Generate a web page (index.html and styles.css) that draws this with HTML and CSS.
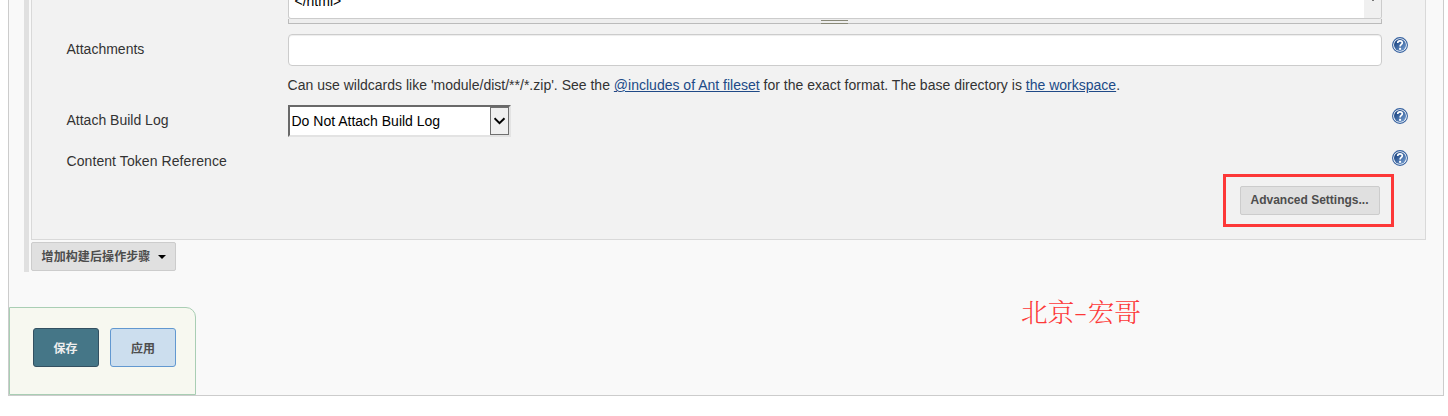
FILE: index.html
```html
<!DOCTYPE html>
<html lang="zh-CN">
<head>
<meta charset="utf-8">
<title>Jenkins</title>
<link rel="stylesheet" href="styles.css">
</head>
<body>
<svg class="defs" width="0" height="0">
  <defs>
    <linearGradient id="blue" x1="0" y1="0" x2="1" y2="1">
      <stop offset="0.2" stop-color="#204a87"/>
      <stop offset="1" stop-color="#7ba4d6"/>
    </linearGradient>
    <symbol id="help" viewBox="0 0 16 16">
      <circle cx="8" cy="8" r="7.4" fill="#fff" stroke="#34609f" stroke-width="1.1"/>
      <circle cx="8" cy="8" r="6" fill="url(#blue)"/>
      <path d="M5.7 5.9C5.7 3.2 10.3 3.1 10.3 5.7C10.3 7.5 8.1 7.4 8.1 9.6" fill="none" stroke="#fff" stroke-width="1.7"/>
      <rect x="7.1" y="10.8" width="2" height="2" fill="#fff"/>
    </symbol>
  </defs>
</svg>
<main class="page">
  <div class="publisher">
    <section class="panel">
      <div class="row row-content">
        <div class="field">
          <div class="textarea"><span class="code">&lt;/html&gt;</span><div class="scroll"><i></i></div></div>
          <div class="handle"><i></i></div>
        </div>
      </div>
      <div class="row row-attachments">
        <label class="label">Attachments</label>
        <input class="input field" type="text">
        <svg class="help"><use href="#help"/></svg>
      </div>
      <div class="row row-description">
        <p class="description field">Can use wildcards like 'module/dist/**/*.zip'. See the <a href="#">@includes of Ant fileset</a> for the exact format. The base directory is <a href="#">the workspace</a>.</p>
      </div>
      <div class="row row-log">
        <label class="label">Attach Build Log</label>
        <div class="select field"><span>Do Not Attach Build Log</span><div class="arrow"><svg width="12" height="8" viewBox="0 0 12 8"><path d="M0.5 1.2L5.5 6.2L10.5 1.2" fill="none" stroke="#000" stroke-width="2"/></svg></div></div>
        <svg class="help"><use href="#help"/></svg>
      </div>
      <div class="row row-token">
        <label class="label token">Content Token Reference</label>
        <svg class="help"><use href="#help"/></svg>
      </div>
      <div class="advanced"><div class="highlight"><button class="button settings">Advanced Settings...</button></div></div>
    </section>
    <button class="button add">增加构建后操作步骤<i class="caret"></i></button>
  </div>
  <div class="bottom">
    <div class="sticker">
      <button class="action save">保存</button>
      <button class="action apply">应用</button>
    </div>
    <div class="signature">北京<span>-</span>宏哥</div>
  </div>
</main>
</body>
</html>
```
FILE: styles.css
```css
* { box-sizing: border-box; }
body {
  margin: 0;
  height: 416px;
  overflow: hidden;
  background: #fff;
  color: #333;
  font: 14px/18px "Liberation Sans", "Noto Sans CJK SC", sans-serif;
}
.defs { position: absolute; }
.page {
  width: 1436px;
  height: 396px;
  margin-left: 8px;
  padding-left: 15px;
  border: 1px solid #ccc;
  border-top: 0;
  background: #f9f9f9;
}
.publisher {
  width: 1402px;
  height: 272px;
  padding-left: 2px;
  border-left: 5px solid #e0e0e0;
}
.panel {
  width: 1395px;
  height: 240px;
  border: 1px solid #d9d9d9;
  border-top: 0;
  background: #f2f2f2;
}
.row {
  display: grid;
  grid-template-columns: 221.5px 1094px 26px;
  padding-left: 34.5px;
}
.label { grid-column: 1; }
.token { letter-spacing: 0.08px; }
.field { grid-column: 2; }
.help { grid-column: 3; width: 16px; height: 16px; margin-left: 10px; }
.row-content { height: 34px; }
.textarea {
  display: flex;
  justify-content: space-between;
  height: 19px;
  overflow: hidden;
  border: 1px solid #ccc;
  border-top: 0;
  border-radius: 0 0 3px 3px;
  background: #fff;
  color: #000;
}
.code { margin: -8px 0 0 5.5px; }
.scroll { display: flex; justify-content: center; width: 17px; background: #f0f0f0; }
.scroll i { width: 2px; height: 1px; background: #777; }
.handle {
  height: 5px;
  border: 1px solid #bbb;
  border-top: 0;
  background: #eee;
}
.handle i {
  display: block;
  width: 27px;
  height: 4px;
  margin: 0 auto 0 532px;
  border: solid #888877;
  border-width: 1px 0;
  transform: translateY(1px);
}
.row-attachments { height: 42px; }
.row-attachments .label { padding-top: 6px; }
.row-attachments .help { margin-top: 3px; }
.input {
  width: 1094px;
  height: 32px;
  border: 1px solid #ccc;
  border-radius: 4px;
  background: #fff;
  box-shadow: inset 0 1px 1px rgba(0, 0, 0, .075);
}
.row-description { height: 29px; }
.description { margin: 0 0 0 -0.4px; white-space: nowrap; letter-spacing: 0.005px; }
.description a { color: #204a87; }
.row-log { height: 45px; }
.row-log .label { padding-top: 6px; }
.row-log .help { margin-top: 3px; }
.select {
  display: flex;
  align-items: center;
  justify-content: space-between;
  width: 223px;
  height: 32px;
  padding: 0 0 0 1.5px;
  border: 2px solid;
  border-color: #696969 #e3e3e3 #e3e3e3 #696969;
  background: #fff;
  color: #000;
}
.arrow {
  display: flex;
  align-items: center;
  justify-content: center;
  width: 19px;
  height: 28px;
  border: 1px solid #707070;
  background: #f0f0f0;
}
.row-token { height: 24px; }
.row-token .label { padding-top: 2px; }
.advanced {
  display: flex;
  justify-content: flex-end;
  padding-right: 31px;
}
.highlight {
  width: 171px;
  height: 53px;
  padding: 9px 11px 8px 14px;
  border: 3px solid #fd3838;
}
.button {
  display: flex;
  align-items: center;
  justify-content: center;
  width: 140px;
  height: 29px;
  padding: 0;
  border: 1px solid #ccc;
  border-radius: 2px;
  background: #e0e0e0;
  color: #4d4d4d;
  font: bold 12px/18px "Liberation Sans", "Noto Sans CJK SC", sans-serif;
}
.settings { padding: 0 1px 2px 0; }
.add { width: 145px; margin-top: 2px; padding-left: 1px; letter-spacing: 0.1px; }
.caret {
  margin-left: 8px;
  border: 4px solid transparent;
  border-top-color: #000;
  border-bottom: 0;
}
.bottom {
  display: flex;
  align-items: flex-start;
  justify-content: space-between;
  height: 123px;
  margin-left: -15px;
  padding: 23px 302px 0 0;
}
.sticker {
  display: flex;
  gap: 11px;
  width: 187px;
  height: 88px;
  margin-top: 12px;
  padding: 20px 0 0 23px;
  border: 1px solid #a9ceb4;
  border-radius: 0 10px 0 0;
  background: #f7f8f0;
}
.action {
  width: 66px;
  height: 39px;
  padding: 2px 1px 0 0;
  border: 1px solid #335061;
  border-radius: 3px;
  background: #457687;
  color: #eee;
  font: bold 12px/18px "Liberation Sans", "Noto Sans CJK SC", sans-serif;
}
.apply { padding-right: 0; border-color: #6298d0; background: #ccdeee; color: #4d4d4d; }
.signature {
  display: flex;
  color: #fd3838;
  font: 300 26.67px/32px "Noto Serif CJK SC", "Noto Sans CJK SC", serif;
}
.signature span { width: 13.3px; text-align: center; transform: scaleX(1.5); }
```
